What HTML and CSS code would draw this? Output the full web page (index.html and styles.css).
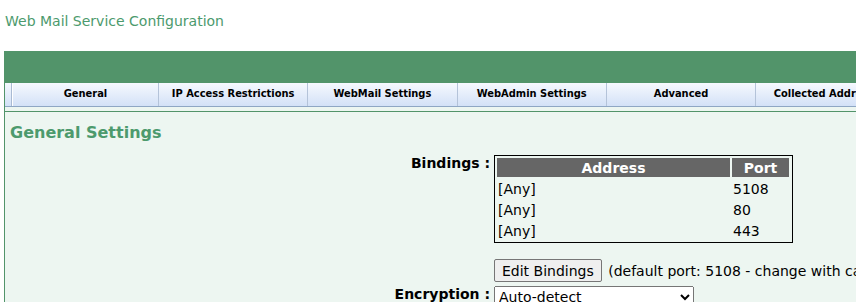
FILE: index.html
```html
<!DOCTYPE html>
<html lang="en">
<head>
    <meta charset="UTF-8">
    <title>Web Mail Service Configuration</title>
    <link rel="stylesheet" href="styles.css">
</head>
<body>
    <div class="page-title">Web Mail Service Configuration</div>

    <div class="panel">
        <div class="panel-head"></div>
        <div class="tabs">
            <div class="tab-stub"></div>
            <div class="tab active">General</div>
            <div class="tab">IP Access Restrictions</div>
            <div class="tab">WebMail Settings</div>
            <div class="tab">WebAdmin Settings</div>
            <div class="tab">Advanced</div>
            <div class="tab">Collected Addresses</div>
        </div>
        <div class="panel-body">
            <h2 class="section-title">General Settings</h2>
            <div class="form-grid">
                <div class="form-label">Bindings :</div>
                <div class="form-value">
                    <table class="bindings">
                        <tr><th class="col-addr">Address</th><th class="col-port">Port</th></tr>
                        <tr><td>[Any]</td><td>5108</td></tr>
                        <tr><td>[Any]</td><td>80</td></tr>
                        <tr><td>[Any]</td><td>443</td></tr>
                    </table>
                    <div class="edit-row">
                        <button type="button" class="btn">Edit Bindings</button>
                        <span class="hint">(default port: 5108 - change with caution)</span>
                    </div>
                </div>

                <div class="form-label">Encryption :</div>
                <div class="form-value">
                    <select class="select">
                        <option>Auto-detect</option>
                        <option>SSL</option>
                        <option>None</option>
                    </select>
                </div>
            </div>
        </div>
    </div>
</body>
</html>
```

FILE: styles.css
```css
body {
    font-family: "DejaVu Sans", Verdana, sans-serif;
    background-color: #ffffff;
    margin: 0;
    padding: 0 0 0 4px;
    overflow: hidden;
    color: #000;
}

.page-title {
    color: #4c9a6d;
    font-size: 14px;
    padding: 13px 0 0 1px;
    height: 38px;
    white-space: nowrap;
}

.panel {
    width: 1000px;
    border-left: 1px solid #52946a;
    background-color: #edf6f1;
}

.panel-head {
    height: 32px;
    background-color: #52946a;
    margin-left: -1px;
}

.tabs {
    display: flex;
    height: 23px;
    border-bottom: 1px solid #8fa7c4;
    margin-bottom: 4px;
}

.tab-stub {
    width: 6px;
    border-right: 1px solid #a9bad3;
    background: linear-gradient(#f4f8fe, #d3e1f7);
}

.tab {
    flex: none;
    width: 148.3px;
    border-left: 1px solid #b4c3d9;
    background: linear-gradient(#f6f9fe, #d3e1f7);
    font-family: "DejaVu Sans Condensed", "DejaVu Sans", sans-serif;
    font-weight: bold;
    font-size: 11px;
    text-align: center;
    line-height: 22px;
    white-space: nowrap;
    overflow: hidden;
    color: #000;
}

.tab.active {
    border-left: 1px solid #ffffff;
    width: 145px;
}

.panel-body {
    border-top: 1px solid #52946a;
    padding: 11px 0 0 5px;
    height: 200px;
}

.section-title {
    margin: 0 0 13px 0;
    font-size: 16px;
    font-weight: bold;
    color: #4c9a6d;
}

.form-grid {
    display: grid;
    grid-template-columns: 480px auto;
    column-gap: 4px;
    row-gap: 4px;
    font-size: 14px;
}

.form-label {
    text-align: right;
    font-weight: bold;
    white-space: nowrap;
}

.bindings {
    border: 1px solid #000;
    border-spacing: 2px;
    padding: 0 1px 0 0;
    width: 299px;
}

.bindings th {
    background-color: #666666;
    color: #ffffff;
    font-weight: bold;
    height: 19px;
    padding: 0;
}

.bindings td {
    height: 19px;
    padding: 0 1px;
}

.col-addr {
    width: 233px;
}

.edit-row {
    margin-top: 16px;
    white-space: nowrap;
}

.btn {
    font-family: "DejaVu Sans", Verdana, sans-serif;
    font-size: 14px;
    height: 23px;
    padding: 0 7px;
    background-color: #efefef;
    border: 1px solid #767676;
    border-radius: 2px;
}

.hint {
    margin-left: 2px;
}

.select {
    font-family: "DejaVu Sans", Verdana, sans-serif;
    font-size: 14px;
    width: 200px;
    height: 22px;
}
```
